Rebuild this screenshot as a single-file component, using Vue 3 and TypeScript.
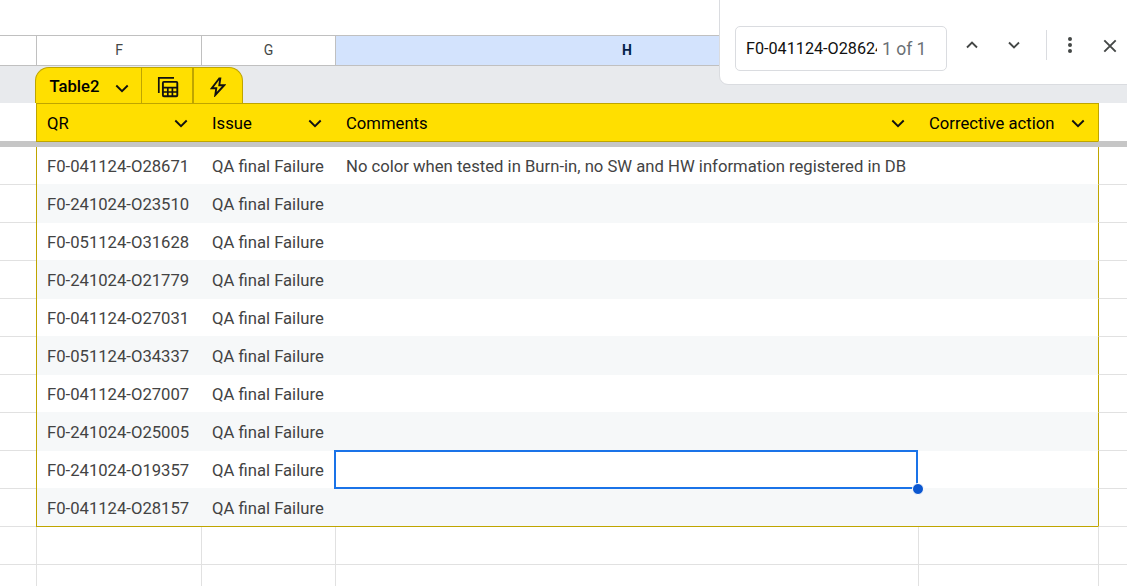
<script setup lang="ts">
interface Row {
  qr: string
  issue: string
  comment: string
}

const letters: string[] = ['', 'F', 'G', 'H', '', '']
const headings: string[] = ['QR', 'Issue', 'Comments', 'Corrective action']
const codes: string[] = [
  'F0-041124-O28671', 'F0-241024-O23510', 'F0-051124-O31628', 'F0-241024-O21779',
  'F0-041124-O27031', 'F0-051124-O34337', 'F0-041124-O27007', 'F0-241024-O25005',
  'F0-241024-O19357', 'F0-041124-O28157',
]
const rows: Row[] = codes.map((qr, i) => ({
  qr,
  issue: 'QA final Failure',
  comment: i === 0 ? 'No color when tested in Burn-in, no SW and HW information registered in DB' : '',
}))
const selectedRow = 8
</script>

<template>
  <main class="sheet">
    <div class="formula-space"></div>
    <div class="columns grid">
      <div v-for="(l, i) in letters" :key="i" class="letter" :class="{ active: l === 'H' }">{{ l }}</div>
    </div>
    <div class="strip">
      <div class="tabs">
        <div class="tab name">
          <span>Table2</span>
          <svg class="tab-chev" width="14" height="9" viewBox="0 0 14 9"><path d="M1.3 1.5 7 7.2l5.7-5.7" /></svg>
        </div>
        <div class="tab view">
          <svg width="22" height="22" viewBox="0 0 22 22">
            <path d="M1.8 17V1.8H17" stroke-width="1.7" />
            <rect x="5.9" y="5.9" width="14.4" height="14.4" rx="1" />
            <path d="M6 11.6h14.2M6 16h14.2M10.8 11.6v8.6M15.4 11.6v8.6" stroke-width="1.7" />
          </svg>
        </div>
        <div class="tab bolt">
          <svg width="16" height="20" viewBox="0 0 16 20"><path d="M9.2 1.5 1.8 11.2h4.5L5.3 18l8.9-9.8H9.3l1-6.7z" /></svg>
        </div>
      </div>
    </div>
    <div class="heads grid">
      <div class="side"></div>
      <div v-for="(h, i) in headings" :key="h" class="head" :class="'head-' + i">
        <span>{{ h }}</span>
        <svg width="14" height="9" viewBox="0 0 14 9"><path d="M1.3 1.5 7 7.2l5.7-5.7" /></svg>
      </div>
      <div class="side"></div>
    </div>
    <div class="freeze"></div>
    <div v-for="(r, i) in rows" :key="r.qr" class="row grid" :class="{ band: i % 2 === 1, last: i === rows.length - 1 }">
      <div class="side"></div>
      <div class="data first">{{ r.qr }}</div>
      <div class="data">{{ r.issue }}</div>
      <div class="data comment">{{ r.comment }}
        <div v-if="i === selectedRow" class="selection"><i class="handle"></i></div>
      </div>
      <div class="data"></div>
      <div class="side end"></div>
    </div>
    <div v-for="n in 2" :key="n" class="blank grid">
      <div v-for="c in 6" :key="c"></div>
    </div>

    <div class="find">
      <div class="field"><span class="query">F0-041124-O28624</span><span class="count">1 of 1</span></div>
      <svg class="up" width="14" height="10" viewBox="0 0 14 10"><path d="M2 7.5 7 2.5l5 5" /></svg>
      <svg class="down" width="14" height="10" viewBox="0 0 14 10"><path d="M2 2.5l5 5 5-5" /></svg>
      <span class="rule"></span>
      <svg class="more" width="6" height="18" viewBox="0 0 6 18"><circle cx="3" cy="3" r="2" /><circle cx="3" cy="9" r="2" /><circle cx="3" cy="15" r="2" /></svg>
      <svg class="close" width="14" height="14" viewBox="0 0 14 14"><path d="M1.3 1.3l11.4 11.4M12.7 1.3 1.3 12.7" /></svg>
    </div>
  </main>
</template>

<style>
body { margin: 0; background: #fff; }
</style>

<style scoped>
* { box-sizing: border-box; }
.sheet { position: relative; width: 1127px; height: 586px; overflow: hidden; background: #fff; font-family: Roboto, sans-serif; font-size: 16.67px; color: #434343; }
svg { display: block; flex: none; fill: none; stroke: #111; stroke-width: 1.9; }
.grid { display: grid; grid-template-columns: 36px 165px 134px 583px 180px 29px; }
.formula-space { height: 35px; }
.columns { height: 31px; border-top: 1px solid #c0c0c0; border-bottom: 1px solid #c0c0c0; }
.letter { border-left: 1px solid #c0c0c0; display: flex; align-items: center; justify-content: center; font-size: 14px; color: #444746; padding-bottom: 1px; }
.letter:first-child { border-left: 0; }
.letter.active { background: #d3e3fd; color: #041e49; font-weight: 700; }
.strip { height: 37px; background: #e8eaed; padding: 1px 0 0 35px; }
.tabs { display: flex; width: 208px; height: 36px; border: 1px solid #bfa500; border-bottom: 0; border-radius: 14px 14px 0 0; background: #ffdf00; }
.tab { display: flex; align-items: center; justify-content: center; }
.name { width: 106px; border-right: 1px solid #bfa500; gap: 15px; padding: 2px 0 0 1px; font-weight: 500; color: #000; }
.tab-chev { margin-top: 3px; }
.view { width: 52px; border-right: 2px solid #bfa500; padding: 2px 0 0 2px; }
.bolt { flex: 1; padding-top: 2px; }
.heads { height: 39px; color: #000; }
.head { display: flex; align-items: center; justify-content: space-between; padding: 2px 13px 0 11px; background: #ffdf00; border-top: 1px solid #bfa500; border-bottom: 1px solid #bfa500; }
.head-0 { padding-left: 10px; border-left: 1px solid #bfa500; }
.heads .side { border-bottom: 1px solid #c6c6c6; }
.heads .side:last-child { border-left: 1px solid #bfa500; }
.freeze { height: 5px; background: #c6c6c6; }
.row { height: 38px; }
.row .side { border-bottom: 1px solid #e1e1e1; }
.row .end { border-left: 1px solid #bfa500; }
.data { height: 38px; padding: 1px 0 0 11px; line-height: 37px; white-space: nowrap; }
.first { padding-left: 11px; }
.band .data { background: #f6f8f9; box-shadow: 0 -1px #f6f8f9; }
.row .side:first-child { box-shadow: 1px 0 #bfa500; position: relative; z-index: 1; }
.last .data { border-bottom: 1px solid #bfa500; }
.comment { position: relative; }
.selection { position: absolute; z-index: 2; left: -1px; top: -1px; width: 584px; height: 39px; border: 2px solid #1a73e8; background: #fff; }
.handle { position: absolute; right: -8px; bottom: -8px; width: 12px; height: 12px; border: 1px solid #fff; border-radius: 50%; background: #0b57d0; }
.blank > div { height: 38px; border-left: 1px solid #e1e1e1; border-bottom: 1px solid #e1e1e1; }
.blank > div:first-child { border-left: 0; }
.find { position: absolute; z-index: 3; top: -1px; left: 719px; width: 409px; height: 86px; display: flex; align-items: flex-start; padding: 26px 0 0 15px; background: #fff; border: 1px solid #dadce0; border-radius: 0 0 0 9px; }
.field { display: flex; align-items: center; width: 212px; height: 45px; padding-left: 10px; border: 1px solid #dadce0; border-radius: 5px; }
.query { width: 131px; overflow: hidden; white-space: nowrap; font-size: 16.2px; color: #111; }
.count { margin-left: 5px; font-size: 17.5px; color: #6b7075; }
.find svg { stroke: #444746; }
.find .up { margin: 14px 0 0 18px; }
.find .down { margin: 14px 0 0 28px; }
.rule { width: 1px; height: 30px; margin: 4px 0 0 25px; background: #dadce0; }
.find .more { margin: 10px 0 0 20px; fill: #444746; stroke: none; }
.find .close { margin: 13px 0 0 30px; }
</style>
